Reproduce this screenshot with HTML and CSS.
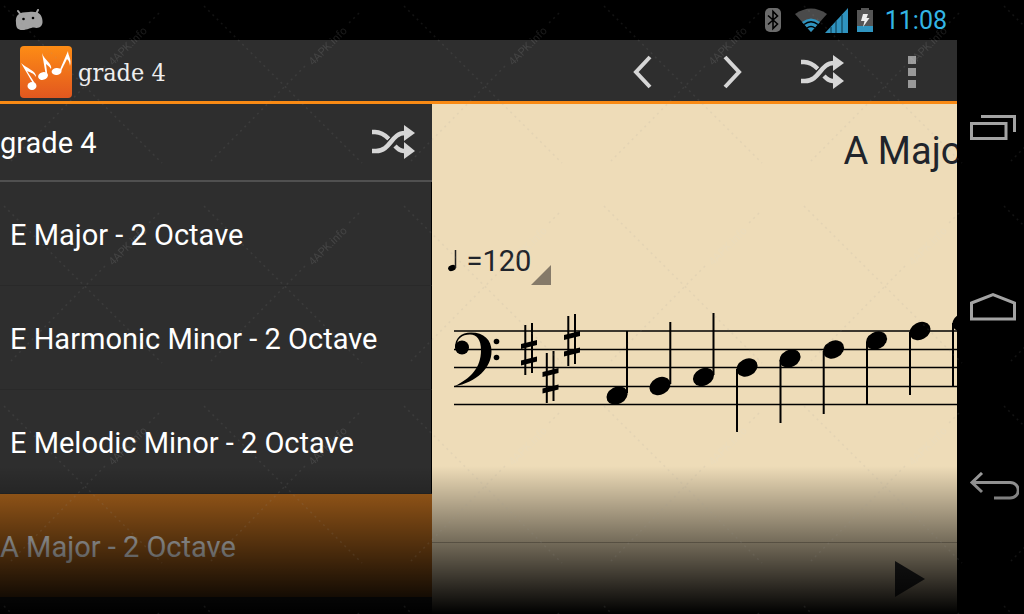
FILE: index.html
```html
<!DOCTYPE html>
<html lang="en">
<head>
    <meta charset="utf-8">
    <title>grade 4</title>
    <link rel="stylesheet" href="styles.css">
</head>
<body>
    <!-- Shared shapes -->
    <svg class="defs" width="0" height="0">
        <defs>
            <symbol id="shuffle" viewBox="0 0 44 36">
                <path d="M1 8H4C10 8 14 11 18 15M24 22C27 25 29 27 33 27" fill="none" stroke="#d6d6d6" stroke-width="4.500"/>
                <path d="M1 27H5C20 27 20 9 34 9" fill="none" stroke="#2e2e2e" stroke-width="7"/>
                <path d="M1 27H5C20 27 20 9 34 9" fill="none" stroke="#d6d6d6" stroke-width="4.500"/>
                <path d="M33 1L44 9L33 17ZM33 18L44 27L33 35Z" fill="#d6d6d6"/>
            </symbol>
            <g id="sharp">
                <path d="M-3.700 -24V26M3 -26V24" stroke="#000" stroke-width="2"/>
                <path d="M-8 -5L8 -9V-4L-8 0ZM-8 11.500L8 7.500V12.500L-8 16.500Z"/>
            </g>
            <ellipse id="head" rx="11" ry="8.600" transform="rotate(-28)"/>
        </defs>
    </svg>

    <div class="device">
        <div class="screen">
            <!-- Status bar -->
            <div class="status">
                <svg class="droid" width="28" height="22" viewBox="0 0 28 22">
                    <path d="M3 2L6 6M23 1L21 5" stroke="#a3a3a3" stroke-width="2" stroke-linecap="round"/>
                    <path d="M1 14C0 6 4 3 14 3C23 2 27 5 27.500 12C28 18 23 20 19 18.500C15 18.500 13 21 7 21C3 21 1 19 1 14Z" fill="#a3a3a3"/>
                    <circle cx="8.500" cy="10" r="1.300"/><circle cx="18" cy="9" r="1.300"/>
                </svg>
                <svg width="16" height="24" viewBox="0 0 16 24">
                    <rect width="16" height="24" rx="5" fill="#6b6b6b"/>
                    <path d="M3 7.500L12.500 16L8 20.500V3.500L12.500 8L3 16.500" fill="none" stroke="#000" stroke-width="1.600"/>
                </svg>
                <svg class="wifi" width="32" height="24" viewBox="0 0 32 24">
                    <path d="M0 6Q16 -5 32 6L16 24Z" fill="#4a4a4a"/>
                    <path d="M7 14Q16 7 25 14L16 24Z" fill="#2f93bf"/>
                    <path d="M9 16.500Q16 11 23 16.500M12 20Q16 17 20 20" fill="none" stroke="#000" stroke-width="1.500"/>
                </svg>
                <svg class="signal" width="23" height="25" viewBox="0 0 23 25">
                    <path d="M0 25L23 0V25Z" fill="#2f93bf"/>
                    <path d="M6 19V25M11 13V25M17 7V25" stroke="#0b3447" stroke-width="1"/>
                </svg>
                <svg width="16" height="24" viewBox="0 0 16 24">
                    <path d="M0 2H4V0H12V2H16V24H0Z" fill="#555"/>
                    <path d="M0 18H16V24H0Z" fill="#3095c0"/>
                    <path d="M6 6H11L9.500 10H12.500L6 19L7.500 13H4Z" fill="#eee"/>
                </svg>
                <span class="clock">11:08</span>
            </div>

            <!-- Action bar -->
            <header class="bar">
                <svg class="logo" width="52" height="52" viewBox="0 0 52 52">
                    <defs>
                        <linearGradient id="orange" x1="0" y1="0" x2="0" y2="1">
                            <stop offset="0" stop-color="#fd8c15"/>
                            <stop offset="1" stop-color="#e2571f"/>
                        </linearGradient>
                    </defs>
                    <rect width="52" height="52" rx="4" fill="url(#orange)"/>
                    <g fill="#fff">
                        <ellipse cx="12" cy="40" rx="4.500" ry="4"/>
                        <ellipse cx="23" cy="30" rx="5" ry="3.800" transform="rotate(-18 23 30)"/>
                        <ellipse cx="36.500" cy="25.500" rx="5" ry="3.500" transform="rotate(-8 36 25)"/>
                        <path d="M1 17C6 22 17 25 16 31C14 27 9 26 7 25L16 39L14.500 40Z"/>
                        <path d="M22 7C24 14 33 18 31 23C29 20 27 19 26 18L27.500 30L26 30Z"/>
                        <path d="M48 5C48 10 52 13 50 20C49.500 15 48 14 47 13L41 25L39.500 24.500Z"/>
                    </g>
                </svg>
                <h1>grade 4</h1>
                <button type="button" aria-label="Previous">
                    <svg width="20" height="34" viewBox="0 0 20 34"><path d="M18 2L4 17L18 32" fill="none" stroke="#d6d6d6" stroke-width="4"/></svg>
                </button>
                <button type="button" aria-label="Next">
                    <svg width="20" height="34" viewBox="0 0 20 34"><path d="M3 2L17 17L3 32" fill="none" stroke="#d6d6d6" stroke-width="4"/></svg>
                </button>
                <button type="button" aria-label="Shuffle">
                    <svg width="44" height="36"><use href="#shuffle"/></svg>
                </button>
                <button type="button" aria-label="More options">
                    <svg width="8" height="32" viewBox="0 0 8 32"><path d="M0 0H8V8H0ZM0 12H8V20H0ZM0 24H8V32H0Z" fill="#999"/></svg>
                </button>
            </header>

            <div class="content">
                <!-- Scale list -->
                <aside class="scales">
                    <div class="scales-head">
                        <h2>grade 4</h2>
                        <button type="button" aria-label="Shuffle grade 4">
                            <svg width="44" height="36"><use href="#shuffle"/></svg>
                        </button>
                    </div>
                    <ul>
                        <li><button type="button">E Major - 2 Octave</button></li>
                        <li><button type="button">E Harmonic Minor - 2 Octave</button></li>
                        <li><button type="button">E Melodic Minor - 2 Octave</button></li>
                        <li class="selected"><button type="button">A Major - 2 Octave</button></li>
                    </ul>
                </aside>

                <!-- Sheet music -->
                <main class="score">
                    <div class="sheet">
                        <h2>A Major</h2>
                        <button class="tempo" type="button">
                            <svg width="12" height="24" viewBox="0 0 12 24"><ellipse cx="4" cy="19" rx="4" ry="3" transform="rotate(-20 4 19)"/><path d="M7.500 1V19" stroke="#222" stroke-width="1.500"/></svg>
                            <span>=120</span>
                            <svg class="corner" width="20" height="20" viewBox="0 0 20 20"><path d="M20 0V20H0Z" fill="#857a69"/></svg>
                        </button>
                        <svg class="staff" width="600" height="140" viewBox="454 300 600 140">
                            <path d="M454 331H1054M454 349.500H1054M454 367.500H1054M454 386.500H1054M454 404.500H1054" stroke="#000" stroke-width="1.500"/>
                            <!-- bass clef -->
                            <circle cx="462" cy="347.500" r="7"/>
                            <path d="M455 348C455 338 461 332.500 471 332.500C484 332.500 491.500 340 491.500 351C491.500 368 477 382 454 386.500C471 378 481 368 481 350C481 340 477 334.500 470 334.500C462 334.500 456.500 339 457 346Z"/>
                            <circle cx="496.500" cy="341.500" r="2.800"/>
                            <circle cx="496.500" cy="357.500" r="2.800"/>
                            <use href="#sharp" x="529" y="349"/>
                            <use href="#sharp" x="550.500" y="377"/>
                            <use href="#sharp" x="572" y="340"/>
                            <!-- notes -->
                            <use href="#head" x="617" y="395.500"/>
                            <use href="#head" x="660" y="386"/>
                            <use href="#head" x="703.500" y="377"/>
                            <use href="#head" x="747" y="367.500"/>
                            <use href="#head" x="790" y="358.500"/>
                            <use href="#head" x="833.500" y="349.500"/>
                            <use href="#head" x="876.500" y="340.500"/>
                            <use href="#head" x="920" y="331"/>
                            <use href="#head" x="963" y="322"/>
                            <path d="M627 331V393M670.300 322V384M713.500 313V375M737 369V432M780.500 360V423M823.700 351V414M867 342V405M910 332V395M953 323V386" stroke="#000" stroke-width="2"/>
                        </svg>
                    </div>
                    <div class="player">
                        <button type="button" aria-label="Play">
                            <svg width="30" height="36" viewBox="0 0 30 36"><path d="M0 0L30 18L0 36Z" fill="#2c2c2c"/></svg>
                        </button>
                    </div>
                </main>
            </div>
        </div>

        <!-- System buttons -->
        <nav class="system">
            <button type="button" aria-label="Recent apps">
                <svg width="52" height="28" viewBox="0 0 52 28"><path d="M6.500 9.500H41V24.500H6.500ZM16 2.500H49.500V18" fill="none" stroke="#a3a3a3" stroke-width="3"/></svg>
            </button>
            <button type="button" aria-label="Home">
                <svg width="52" height="28" viewBox="0 0 52 28"><path d="M6.500 10L28 1.600L49.500 10V26H6.500Z" fill="none" stroke="#a3a3a3" stroke-width="3"/></svg>
            </button>
            <button type="button" aria-label="Back">
                <svg width="56" height="28" viewBox="0 0 56 28"><path d="M19 1L9 10.500L19 20M9 10.500H47C58 10.500 58 26 47 26H31" fill="none" stroke="#a3a3a3" stroke-width="3"/></svg>
            </button>
        </nav>

        <div class="fade"></div>

        <!-- Watermark -->
        <svg class="watermark" aria-hidden="true">
            <defs>
                <pattern id="mark" width="200" height="200" patternUnits="userSpaceOnUse">
                    <path d="M4 6L162 163M159 13L147 25M105 66L11 161" fill="none" stroke="#999" stroke-width="1.500" stroke-dasharray="2 4"/>
                    <text x="113" y="66" transform="rotate(-45 113 66)">4APK.info</text>
                </pattern>
            </defs>
            <rect width="100%" height="100%" fill="url(#mark)"/>
        </svg>
    </div>
</body>
</html>
```
FILE: styles.css
```css
* {
    box-sizing: border-box;
}

body {
    margin: 0;
    background: #000;
    font-family: Roboto, "Liberation Sans", sans-serif;
    overflow: hidden;
}

h1, h2, ul {
    margin: 0;
    padding: 0;
    font-weight: 400;
}

button {
    padding: 0;
    border: none;
    background: none;
    color: inherit;
    font: inherit;
    cursor: pointer;
}

svg {
    display: block;
    flex-shrink: 0;
}

.defs {
    position: absolute;
}

.device {
    position: relative;
    display: flex;
    height: 100vh;
}

.screen {
    flex: 1;
    min-width: 0;
    display: flex;
    flex-direction: column;
}

/* Status bar */
.status {
    display: flex;
    align-items: center;
    height: 40px;
    padding: 0 10px 0 15px;
}

.droid {
    margin-right: auto;
}

.wifi {
    margin-left: 14px;
}

.signal {
    margin-right: 9px;
    margin-left: -2px;
}

.clock {
    margin-left: 12px;
    padding-top: 2px;
    color: #33b5e5;
    font-size: 25px;
    line-height: 40px;
}

/* Action bar */
.bar {
    display: flex;
    align-items: center;
    height: 64px;
    padding-top: 2px;
    padding-left: 20px;
    background: #2e2e2e;
    border-bottom: 3px solid #f98a14;
}

.bar h1 {
    margin-left: 6px;
    margin-right: auto;
    padding-top: 2px;
    color: #eee;
    font-family: "DejaVu Serif Condensed", "DejaVu Serif", serif;
    font-size: 25px;
}

.bar button {
    display: flex;
    align-items: center;
    justify-content: center;
    width: 90px;
    height: 58px;
}

.content {
    flex: 1;
    min-height: 0;
    display: flex;
}

/* Scale list */
.scales {
    width: 45.1%;
    background: #2e2e2e;
    color: #fff;
    font-size: 29px;
    overflow: hidden;
}

.scales-head {
    display: flex;
    align-items: center;
    justify-content: space-between;
    height: 78px;
    padding-right: 17px;
    border-bottom: 2px solid #505050;
}

.scales h2 {
    padding-top: 2px;
    font-size: 29px;
}

.scales ul {
    list-style: none;
}

.scales li button {
    display: block;
    width: 100%;
    height: 104px;
    padding-top: 2px;
    padding-left: 10px;
    border-right: 1px solid #000;
    border-bottom: 1px solid #292929;
    text-align: left;
}

.scales .selected button {
    padding-left: 0;
    background: #ae651c;
    border-right: none;
}

/* Sheet music */
.score {
    flex: 1;
    min-width: 0;
    display: flex;
    flex-direction: column;
    background: #eedcb8;
    color: #20242b;
}

.sheet {
    flex: 1;
    min-height: 0;
    padding-left: 16px;
    overflow: hidden;
}

.sheet h2 {
    padding: 23px 0 0 396px;
    font-size: 38px;
    line-height: 48px;
    white-space: nowrap;
}

.tempo {
    display: flex;
    align-items: center;
    height: 48px;
    margin-top: 62px;
    font-size: 29px;
}

.tempo span {
    margin-left: 7px;
}

.corner {
    align-self: flex-end;
}

.staff {
    margin: 15px 0 0 6px;
}

.player {
    display: flex;
    align-items: center;
    justify-content: flex-end;
    height: 72px;
    padding-right: 32px;
    border-top: 1px solid #b3a488;
}

/* System buttons */
.system {
    display: flex;
    flex-direction: column;
    align-items: center;
    justify-content: center;
    width: 67px;
    background: #000;
}

.system button {
    display: flex;
    align-items: center;
    height: 179px;
}

/* Overlays */
.fade {
    position: absolute;
    right: 0;
    bottom: 0;
    left: 0;
    height: 148px;
    background: linear-gradient(transparent, #000);
    pointer-events: none;
}

.watermark {
    position: absolute;
    inset: 0;
    width: 100%;
    height: 100%;
    opacity: 0.12;
    pointer-events: none;
}

.watermark text {
    fill: #ddd;
    font-size: 11px;
}
```
